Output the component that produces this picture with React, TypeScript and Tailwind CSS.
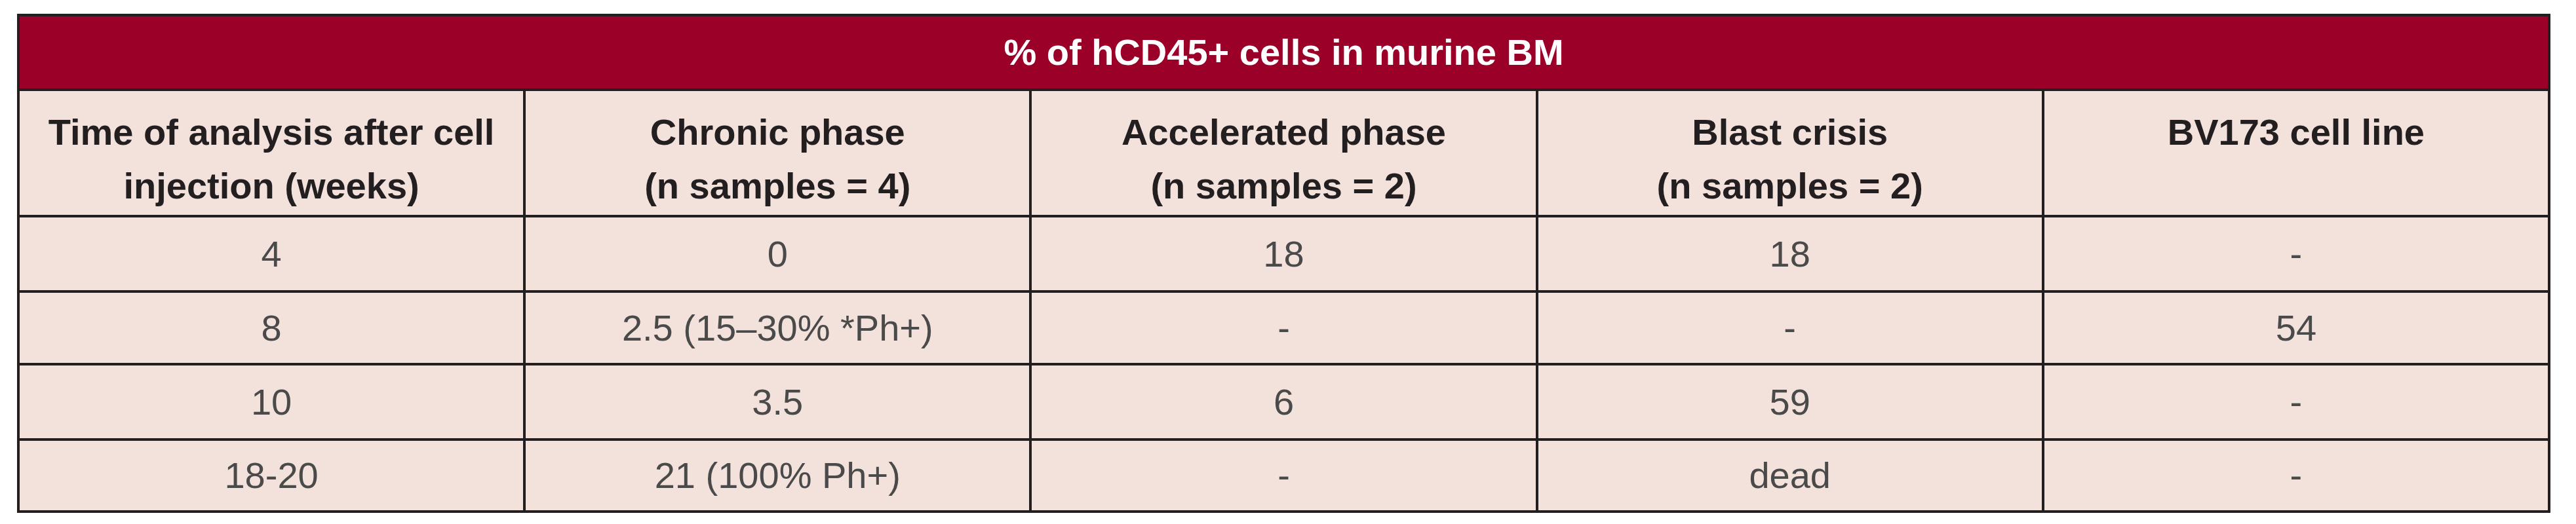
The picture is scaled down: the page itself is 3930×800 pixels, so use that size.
const columns = [
  ['Time of analysis after cell', 'injection (weeks)'],
  ['Chronic phase', '(n samples = 4)'],
  ['Accelerated phase', '(n samples = 2)'],
  ['Blast crisis', '(n samples = 2)'],
  ['BV173 cell line'],
]

const rows = [
  ['4', '0', '18', '18', '-'],
  ['8', '2.5 (15–30% *Ph+)', '-', '-', '54'],
  ['10', '3.5', '6', '59', '-'],
  ['18-20', '21 (100% Ph+)', '-', 'dead', '-'],
]

export default function App() {
  return (
    <div className="min-h-[800px] bg-white pl-[26px] pt-[21px] font-['Liberation_Sans',Arial,sans-serif]">
      <div className="grid w-[3865px] grid-cols-5 grid-rows-[110px_189px_111px_107px_111px_106px] gap-[4px] bg-[#231f20] p-[4px]">
        <div className="col-span-5 flex items-center justify-center bg-[#9b0029] text-[56px] font-bold text-white">
          % of hCD45+ cells in murine BM
        </div>

        {columns.map((lines, i) => (
          <div key={i} className="bg-[#f3e1dc] pt-[22px] text-center text-[56px] font-bold leading-[82px] text-[#231f20]">
            {lines.map((line) => (
              <div key={line}>{line}</div>
            ))}
          </div>
        ))}

        {rows.map((row, r) =>
          row.map((cell, c) => (
            <div key={`${r}-${c}`} className="flex items-center justify-center bg-[#f3e1dc] text-[56px] text-[#4a4a4a]">
              {cell}
            </div>
          ))
        )}
      </div>
    </div>
  )
}
